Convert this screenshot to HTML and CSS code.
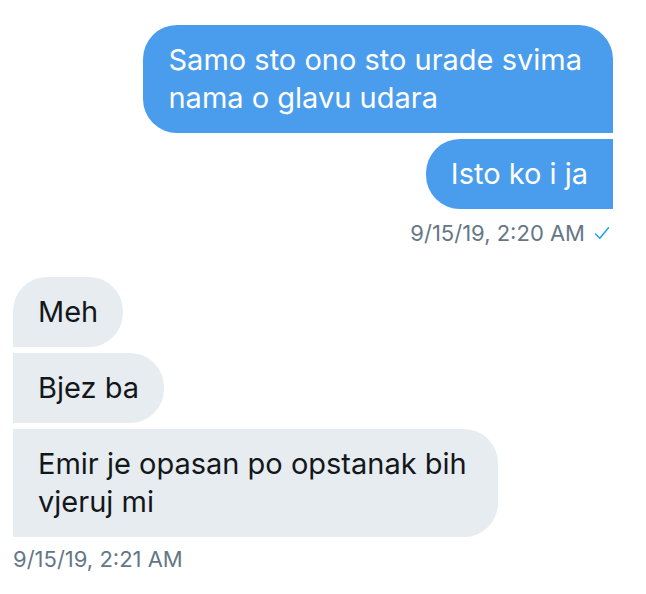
FILE: index.html
```html
<!DOCTYPE html>
<html lang="en">

<head>
    <meta charset="UTF-8">
    <title>Messages</title>
    <link rel="stylesheet" href="styles.css">
</head>

<body>
    <div class="conversation">
        <div class="group sent">
            <div class="bubble first wrapped">Samo sto ono sto urade svima<br>nama o glavu udara</div>
            <div class="bubble last">Isto ko i ja</div>
            <div class="meta">9/15/19, 2:20 AM
                <svg class="check" width="16" height="16" viewBox="0 0 16 16">
                    <path d="M1.5 9 L5.8 13.2 L14.5 2.8" fill="none" stroke="#1da1f2" stroke-width="1.5" stroke-linecap="round" stroke-linejoin="round"/>
                </svg>
            </div>
        </div>

        <div class="group received">
            <div class="bubble first">Meh</div>
            <div class="bubble middle">Bjez ba</div>
            <div class="bubble last wrapped">Emir je opasan po opstanak bih<br>vjeruj mi</div>
            <div class="meta">9/15/19, 2:21 AM</div>
        </div>
    </div>
</body>

</html>
```

FILE: styles.css
```css
body {
    margin: 0;
    background-color: #ffffff;
    font-family: Inter, "Liberation Sans", Arial, sans-serif;
}

.conversation {
    padding: 25px 33px 0 13px;
}

.group {
    display: flex;
    flex-direction: column;
    gap: 6px;
}

.sent {
    align-items: flex-end;
    margin-bottom: 32px;
}

.received {
    align-items: flex-start;
}

.bubble {
    font-size: 29px;
    line-height: 38px;
    padding: 16px 25px;
    border-radius: 34px;
}

.bubble.wrapped {
    padding-right: 31px;
}

.sent .bubble {
    background-color: #4a9ced;
    color: #ffffff;
}

.sent .first {
    border-bottom-right-radius: 0;
}

.sent .last {
    border-top-right-radius: 0;
    border-bottom-right-radius: 0;
}

.received .bubble {
    background-color: #e6ecf0;
    color: #14171a;
}

.received .first {
    border-bottom-left-radius: 0;
}

.received .middle,
.received .last {
    border-top-left-radius: 0;
    border-bottom-left-radius: 0;
}

.meta {
    display: flex;
    align-items: center;
    gap: 9px;
    font-size: 22px;
    line-height: 24px;
    color: #657786;
    margin-top: 6px;
    padding-right: 3px;
}

.received .meta {
    margin-top: 4px;
    padding-right: 0;
}
```
